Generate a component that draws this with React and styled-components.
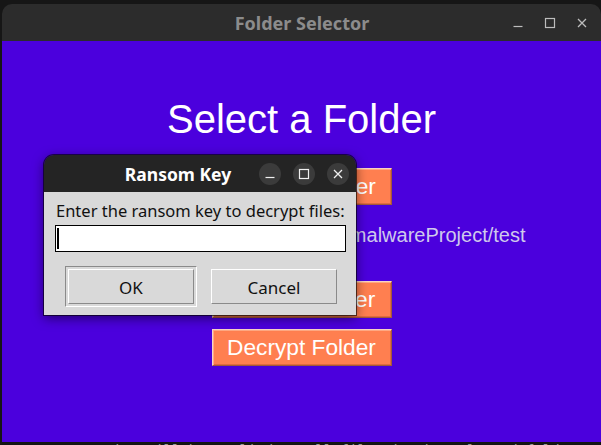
import React from "react";
import styled, { createGlobalStyle } from "styled-components";

const GlobalStyle = createGlobalStyle`
  html, body { margin: 0; padding: 0; background: #171717; overflow: hidden; }
  * { box-sizing: border-box; }
`;

const Desktop = styled.div`
  position: relative;
  width: 601px;
  height: 445px;
  background: #161616;
  overflow: hidden;
  display: flex;
  flex-direction: column;
  padding-top: 4px;
  padding-left: 2px;
`;

const MainWindow = styled.div`
  width: 599px;
  display: flex;
  flex-direction: column;
`;

const TitleBar = styled.div`
  height: 37px;
  background: ${(p) => p.$bg};
  border-radius: ${(p) => p.$radius}px ${(p) => p.$radius}px 0 0;
  display: flex;
  align-items: center;
  position: relative;
  font-family: "Noto Sans", "DejaVu Sans", sans-serif;
  font-weight: 700;
`;

const TitleText = styled.div`
  position: absolute;
  left: ${(p) => p.$center}px;
  top: 50%;
  transform: translate(-50%, -50%);
  color: ${(p) => p.$color};
  font-size: ${(p) => p.$size}px;
  white-space: nowrap;
`;

const Controls = styled.div`
  margin-left: auto;
  display: flex;
  align-items: center;
  gap: ${(p) => p.$gap}px;
  padding-right: ${(p) => p.$pr}px;
`;

const CtrlButton = styled.div`
  width: ${(p) => p.$size}px;
  height: ${(p) => p.$size}px;
  border-radius: 50%;
  background: ${(p) => p.$bg};
  display: flex;
  align-items: center;
  justify-content: center;
`;

const Content = styled.div`
  height: 401px;
  background: #4b00dd;
  display: flex;
  flex-direction: column;
  align-items: center;
  padding-top: 55px;
  font-family: "Liberation Sans", Arial, sans-serif;
`;

const Heading = styled.div`
  color: #ffffff;
  font-size: 40px;
  line-height: 46px;
`;

const OrangeButton = styled.div`
  margin-top: ${(p) => p.$mt}px;
  width: 180px;
  height: 37px;
  background: #ff7f50;
  color: #ffffff;
  font-size: 22.7px;
  display: flex;
  align-items: center;
  justify-content: center;
  border: 1px solid;
  border-color: #f7d3c4 #a4583a #a4583a #f7d3c4;
  box-shadow: inset 1px 1px 0 #ffa882, inset -1px -1px 0 #e06a40;
  white-space: nowrap;
`;

const PathLabel = styled.div`
  margin-top: ${(p) => p.$mt}px;
  padding-left: 10px;
  color: #cfc9ec;
  font-size: 20px;
  line-height: 23px;
  white-space: nowrap;
`;

const BottomStrip = styled.div`
  height: 3px;
  overflow: hidden;
  background: #141414;
  font-family: "DejaVu Sans Mono", monospace;
  font-size: 14px;
  color: #9a9a9a;
  padding-left: 52px;
  white-space: nowrap;
`;

const StripText = styled.div`
  line-height: 14px;
  margin-top: 1px;
`;

const Dialog = styled.div`
  position: absolute;
  left: 44px;
  top: 155px;
  width: 312px;
  display: flex;
  flex-direction: column;
  border-radius: 10px 10px 0 0;
  box-shadow: 0 3px 12px rgba(0, 0, 0, 0.55), 0 0 0 1px rgba(0, 0, 0, 0.6);
`;

const DialogBody = styled.div`
  height: 123px;
  background: #d9d9d9;
  display: flex;
  flex-direction: column;
  padding: 8px 10px 0 11px;
  font-family: "Noto Sans", "DejaVu Sans", sans-serif;
  color: #111;
`;

const Prompt = styled.div`
  font-size: 16.5px;
  line-height: 22px;
  padding-left: 1px;
  white-space: nowrap;
`;

const Entry = styled.div`
  margin-top: 3px;
  width: 291px;
  height: 27px;
  background: #ffffff;
  border: 1px solid #000;
  display: flex;
  align-items: center;
  padding-left: 1px;
`;

const Caret = styled.div`
  width: 2px;
  height: 21px;
  background: #000;
`;

const ButtonRow = styled.div`
  margin-top: 14px;
  display: flex;
  align-items: center;
  gap: 14px;
  padding-left: 10px;
`;

const DefaultRing = styled.div`
  padding: 2px;
  border: 1px solid;
  border-color: #8a8a8a #ffffff #ffffff #8a8a8a;
`;

const DialogButton = styled.div`
  width: 126px;
  height: 35px;
  background: #d9d9d9;
  border: 1px solid;
  border-color: #ffffff #8a8a8a #8a8a8a #ffffff;
  display: flex;
  align-items: center;
  justify-content: center;
  font-size: 17px;
  padding-top: 1px;
`;

const MinIcon = ({ c }) => (
  <svg width="12" height="12" viewBox="0 0 12 12">
    <line x1="1.5" y1="9.5" x2="10.5" y2="9.5" stroke={c} strokeWidth="1.2" />
  </svg>
);
const MaxIcon = ({ c }) => (
  <svg width="12" height="12" viewBox="0 0 12 12">
    <rect x="1.5" y="1.5" width="9" height="9" fill="none" stroke={c} strokeWidth="1.2" />
  </svg>
);
const CloseIcon = ({ c }) => (
  <svg width="12" height="12" viewBox="0 0 12 12">
    <path d="M2 2 L10 10 M10 2 L2 10" stroke={c} strokeWidth="1.3" />
  </svg>
);

export default function App() {
  return (
    <>
      <GlobalStyle />
      <Desktop>
        <MainWindow>
          <TitleBar $bg="#2c2c2c" $radius={10}>
            <TitleText $center={300} $color="#8c8c8c" $size={18}>
              Folder Selector
            </TitleText>
            <Controls $gap={20} $pr={13}>
              <CtrlButton $size={12} $bg="transparent"><MinIcon c="#bdbdbd" /></CtrlButton>
              <CtrlButton $size={12} $bg="transparent"><MaxIcon c="#bdbdbd" /></CtrlButton>
              <CtrlButton $size={12} $bg="transparent"><CloseIcon c="#bdbdbd" /></CtrlButton>
            </Controls>
          </TitleBar>
          <Content>
            <Heading>Select a Folder</Heading>
            <OrangeButton $mt={26}>Choose Folder</OrangeButton>
            <PathLabel $mt={19}>/home/username/Documents/malwareProject/test</PathLabel>
            <OrangeButton $mt={34}>Encrypt Folder</OrangeButton>
            <OrangeButton $mt={11}>Decrypt Folder</OrangeButton>
          </Content>
        </MainWindow>
        <BottomStrip>
          <StripText>Decryption will be applied to all files in the selected folder</StripText>
        </BottomStrip>

        <Dialog>
          <TitleBar $bg="#242424" $radius={10}>
            <TitleText $center={134} $color="#ffffff" $size={17.5}>
              Ransom Key
            </TitleText>
            <Controls $gap={12} $pr={7}>
              <CtrlButton $size={22} $bg="#3b3b3b"><MinIcon c="#f0f0f0" /></CtrlButton>
              <CtrlButton $size={22} $bg="#3b3b3b"><MaxIcon c="#f0f0f0" /></CtrlButton>
              <CtrlButton $size={22} $bg="#3b3b3b"><CloseIcon c="#f0f0f0" /></CtrlButton>
            </Controls>
          </TitleBar>
          <DialogBody>
            <Prompt>Enter the ransom key to decrypt files:</Prompt>
            <Entry>
              <Caret />
            </Entry>
            <ButtonRow>
              <DefaultRing>
                <DialogButton>OK</DialogButton>
              </DefaultRing>
              <DialogButton>Cancel</DialogButton>
            </ButtonRow>
          </DialogBody>
        </Dialog>
      </Desktop>
    </>
  );
}
